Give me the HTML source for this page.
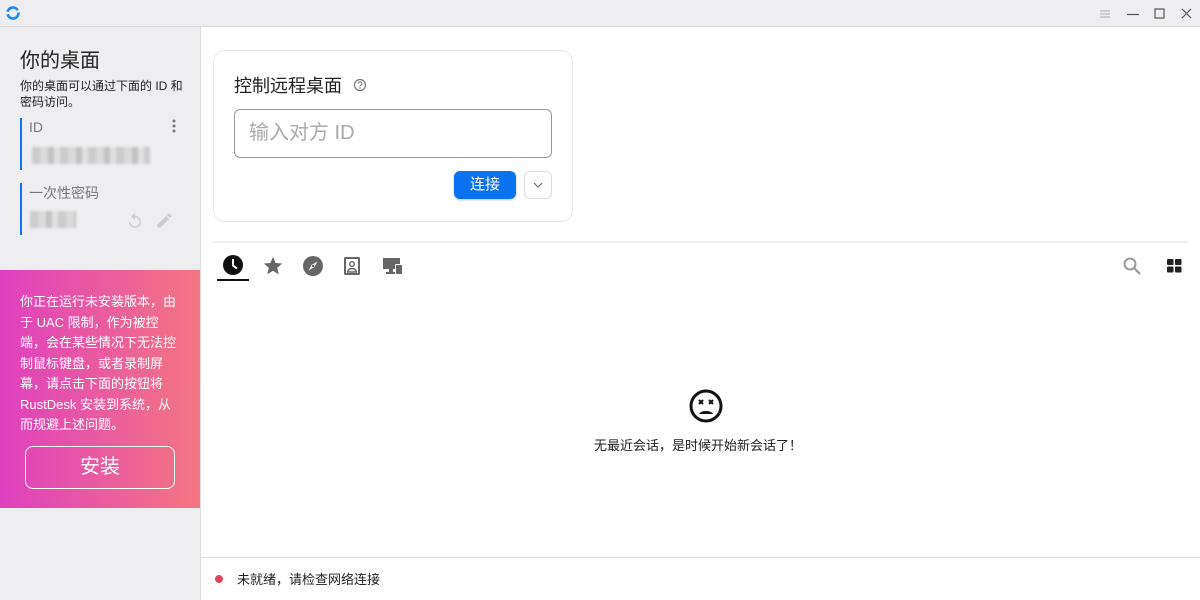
<!DOCTYPE html>
<html><head><meta charset="utf-8"><style>
*{margin:0;padding:0;box-sizing:border-box}
body{width:1200px;height:600px;overflow:hidden;background:#fff;font-family:"Liberation Sans","Noto Sans CJK SC",sans-serif;position:relative;color:#222}
.abs{position:absolute}
.title{left:0;top:0;width:1200px;height:27px;background:#eeeef1;border-bottom:1px solid #d8d8d8}
.side{left:0;top:27px;width:201px;height:573px;background:#eeeef1;border-right:1px solid #dcdcdc}
.blur{background:repeating-linear-gradient(90deg,#c8c8c8 0 8px,#d8d8d8 8px 16px,#bdbdbd 16px 22px,#e0e0e0 22px 28px);filter:blur(1.2px);opacity:.9}
.banner{left:0;top:270px;width:200px;height:238px;background:linear-gradient(90deg,#e040bf,#f37680)}
</style></head><body>
<div class="abs title"></div>
<svg class="abs" style="left:5px;top:5px" width="16" height="16" viewBox="0 0 16 16"><circle cx="8" cy="8" r="5.5" fill="none" stroke="#1a8cf0" stroke-width="2.6" stroke-dasharray="13 2.5 13 2.5" transform="rotate(30 8 8)"/></svg>
<svg class="abs" style="left:1098px;top:8px" width="14" height="12"><path d="M2 3h10M2 6h10M2 9h10" stroke="#aaa" stroke-width="1"/></svg>
<svg class="abs" style="left:1126px;top:8px" width="14" height="12"><path d="M1 6.5h12" stroke="#555" stroke-width="1.2"/></svg>
<svg class="abs" style="left:1153px;top:8px" width="14" height="12"><rect x="2" y="1" width="9" height="9" fill="none" stroke="#555" stroke-width="1.2"/></svg>
<svg class="abs" style="left:1180px;top:8px" width="14" height="12"><path d="M2 1l9 9M11 1l-9 9" stroke="#555" stroke-width="1.2"/></svg>

<div class="abs side"></div>
<div class="abs" style="left:20px;top:44px;font-size:20px;color:#222">你的桌面</div>
<div class="abs" style="left:20px;top:78px;font-size:12px;line-height:16px;width:170px;color:#222">你的桌面可以通过下面的 ID 和密码访问。</div>
<div class="abs" style="left:20px;top:118px;width:2px;height:52px;background:#0a72f0"></div>
<div class="abs" style="left:29px;top:119px;font-size:14px;color:#777">ID</div>
<svg class="abs" style="left:170px;top:118px" width="8" height="16"><circle cx="4" cy="3" r="1.5" fill="#777"/><circle cx="4" cy="8" r="1.5" fill="#777"/><circle cx="4" cy="13" r="1.5" fill="#777"/></svg>
<div class="abs blur" style="left:32px;top:147px;width:118px;height:17px"></div>
<div class="abs" style="left:20px;top:183px;width:2px;height:52px;background:#0a72f0"></div>
<div class="abs" style="left:29px;top:183px;font-size:14px;color:#777">一次性密码</div>
<div class="abs blur" style="left:30px;top:211px;width:46px;height:17px"></div>
<svg class="abs" style="left:126px;top:212px" width="18" height="18" viewBox="0 0 24 24"><path d="M12 5V1L7 6l5 5V7c3.3 0 6 2.7 6 6s-2.7 6-6 6-6-2.7-6-6H4c0 4.4 3.6 8 8 8s8-3.6 8-8-3.6-8-8-8z" fill="#ccc"/></svg>
<svg class="abs" style="left:155px;top:211px" width="19" height="19" viewBox="0 0 24 24"><path d="M3 17.25V21h3.75L17.8 9.94l-3.75-3.75L3 17.25zM20.7 7.04a1 1 0 000-1.41l-2.34-2.34a1 1 0 00-1.41 0l-1.83 1.83 3.75 3.75 1.83-1.83z" fill="#ccc"/></svg>

<div class="abs banner"></div>
<div class="abs" style="left:20px;top:292px;width:158px;font-size:13px;line-height:20.5px;color:#fff">你正在运行未安装版本，由于 UAC 限制，作为被控端，会在某些情况下无法控制鼠标键盘，或者录制屏幕，请点击下面的按钮将 RustDesk 安装到系统，从而规避上述问题。</div>
<div class="abs" style="left:25px;top:446px;width:150px;height:43px;border:1px solid #fff;border-radius:8px;color:#fff;font-size:20px;text-align:center;line-height:41px">安装</div>

<div class="abs" style="left:213px;top:50px;width:360px;height:172px;border:1px solid #e8e8e8;border-radius:12px"></div>
<div class="abs" style="left:234px;top:72px;font-size:18px;color:#222">控制远程桌面</div>
<svg class="abs" style="left:353px;top:78px" width="14" height="14" viewBox="0 0 14 14"><circle cx="7" cy="7" r="5.5" fill="none" stroke="#777" stroke-width="1.2"/><path d="M5.2 5.6a1.8 1.8 0 113 1.3c-.7.4-1.2.7-1.2 1.6" fill="none" stroke="#777" stroke-width="1.1"/><circle cx="7" cy="10" r=".7" fill="#777"/></svg>
<div class="abs" style="left:234px;top:109px;width:318px;height:49px;border:1px solid #999;border-radius:6px;padding-left:14px;font-size:20px;line-height:47px;color:#aaa">输入对方 ID</div>
<div class="abs" style="left:454px;top:171px;width:62px;height:28px;background:#0a72f0;border-radius:6px;color:#fff;font-size:15px;text-align:center;line-height:28px;box-shadow:0 1px 2px rgba(0,0,0,.25)">连接</div>
<div class="abs" style="left:524px;top:171px;width:28px;height:28px;border:1px solid #ddd;border-radius:6px"></div>
<svg class="abs" style="left:532px;top:180px" width="12" height="10"><path d="M2 3l4 4 4-4" fill="none" stroke="#666" stroke-width="1.1"/></svg>

<div class="abs" style="left:213px;top:241px;width:975px;height:2px;background:#eee"></div>
<svg class="abs" style="left:222px;top:254px" width="22" height="22" viewBox="0 0 22 22"><circle cx="11" cy="11" r="10" fill="#111"/><path d="M11 5v6.5l4 3" fill="none" stroke="#fff" stroke-width="2"/></svg>
<div class="abs" style="left:217px;top:279px;width:32px;height:2px;background:#111"></div>
<svg class="abs" style="left:262px;top:255px" width="22" height="22" viewBox="0 0 24 24"><path d="M12 17.3l6.2 3.7-1.6-7 5.4-4.7-7.2-.6L12 2 9.2 8.7 2 9.3l5.4 4.7-1.6 7z" fill="#666"/></svg>
<svg class="abs" style="left:302px;top:255px" width="22" height="22" viewBox="0 0 22 22"><circle cx="11" cy="11" r="10" fill="#666"/><path d="M15.5 6.5L12.3 12.3 6.5 15.5 9.7 9.7z" fill="#fff"/><circle cx="11" cy="11" r="1.2" fill="#666"/></svg>
<svg class="abs" style="left:343px;top:256px" width="18" height="20" viewBox="0 0 18 20"><rect x="1" y="1" width="16" height="18" rx="1.5" fill="#666"/><rect x="3" y="3" width="12" height="14" fill="#fff"/><circle cx="9" cy="8" r="2.3" fill="none" stroke="#666" stroke-width="1.4"/><path d="M4.5 16c.5-2.5 2.2-3.5 4.5-3.5s4 1 4.5 3.5z" fill="none" stroke="#666" stroke-width="1.4"/></svg>
<svg class="abs" style="left:382px;top:256px" width="22" height="20" viewBox="0 0 22 20"><rect x="1" y="2" width="17" height="11" fill="#666"/><rect x="7" y="13" width="4" height="3" fill="#666"/><rect x="4" y="16" width="10" height="2" fill="#666"/><rect x="13" y="8" width="8" height="11" rx="1" fill="#fff"/><rect x="14" y="9" width="6" height="9" fill="#666"/></svg>
<svg class="abs" style="left:1122px;top:256px" width="20" height="20" viewBox="0 0 20 20"><circle cx="8" cy="8" r="5.5" fill="none" stroke="#999" stroke-width="2"/><path d="M12 12l6 6" stroke="#999" stroke-width="2.2"/></svg>
<svg class="abs" style="left:1167px;top:259px" width="15" height="14"><rect x="0" y="0" width="6.5" height="6" rx="1" fill="#222"/><rect x="8" y="0" width="6.5" height="6" rx="1" fill="#222"/><rect x="0" y="7.5" width="6.5" height="6" rx="1" fill="#222"/><rect x="8" y="7.5" width="6.5" height="6" rx="1" fill="#222"/></svg>

<svg class="abs" style="left:688px;top:388px" width="36" height="36" viewBox="0 0 36 36"><circle cx="18" cy="18" r="15" fill="none" stroke="#111" stroke-width="3"/><path d="M11 12l4 4M15 12l-4 4M21 12l4 4M25 12l-4 4" stroke="#111" stroke-width="2"/><path d="M11 26c2-4 12-4 14 0z" fill="#111"/></svg>
<div class="abs" style="left:594px;top:435px;font-size:13px;color:#222">无最近会话，是时候开始新会话了！</div>

<div class="abs" style="left:201px;top:557px;width:999px;height:1px;background:#ddd"></div>
<div class="abs" style="left:215px;top:575px;width:8px;height:8px;border-radius:50%;background:#e0465c"></div>
<div class="abs" style="left:237px;top:569px;font-size:13px;color:#222">未就绪，请检查网络连接</div>
</body></html>
